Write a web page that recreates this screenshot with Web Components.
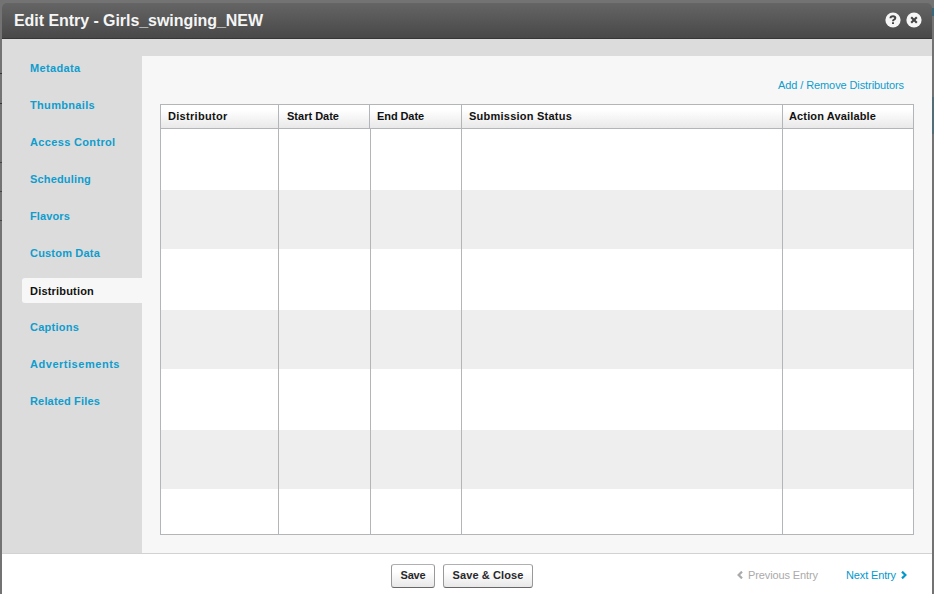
<!DOCTYPE html>
<html lang="en"><head><meta charset="utf-8"><title>Edit Entry</title>
<style>
html,body{margin:0;height:594px;overflow:hidden}
body{font:11px/14px "Liberation Sans",Arial,sans-serif;background:#737373}
</style></head><body>
<entry-dialog></entry-dialog>
<script>
const define=(name,html,init)=>customElements.define(name,class extends HTMLElement{
  connectedCallback(){
    if(this.shadowRoot)return;
    const t=document.createElement('template');t.innerHTML=html;
    this.attachShadow({mode:'open'}).append(t.content.cloneNode(true));
    if(init)init.call(this,this.shadowRoot);
  }
});
// A label whose tracking is adjusted so that its text takes w pixels.
define('fit-label',`<style>:host{display:inline-block;white-space:nowrap}span{display:inline-block}</style><span><slot></slot></span>`,function(r){
  const s=r.querySelector('span'),w=+this.getAttribute('w');
  this.style.width=w+'px';
  s.style.letterSpacing=(w-s.getBoundingClientRect().width)/this.textContent.length+'px';
});
define('title-bar',`<style>
:host{box-sizing:border-box;display:flex;align-items:center;height:36px;padding:1px 10px 0 12px;border-radius:5px 5px 0 0;border-bottom:1px solid #393535;background:linear-gradient(#646564,#474847);color:#f5f5f5;font:bold 16px/20px "Liberation Sans",Arial,sans-serif}
.icons{margin:0 0 2px auto;display:flex;gap:5px}svg{display:block}
</style><slot></slot><div class="icons">
<svg width="16" height="16" viewBox="0 0 16 16"><circle cx="8" cy="8" r="7.6" fill="#f6f6f6"/><path d="M5.6 6.2V5.2Q5.8 4.2 8 4.2T10.3 5.9Q10.3 7 9 7.6Q8 8 8 9.3M8 10.3V12" fill="none" stroke="#444" stroke-width="2"/></svg>
<svg width="16" height="16" viewBox="0 0 16 16"><circle cx="8" cy="8" r="7.6" fill="#f6f6f6"/><path d="M5.2 5.2l5.6 5.6M10.8 5.2l-5.6 5.6" stroke="#444" stroke-width="2.1"/></svg></div>`);
define('nav-item',`<style>
:host{box-sizing:border-box;display:flex;align-items:center;height:25px;margin:0 0 12px 20px;padding:0 0 2px 8px;border-radius:3px 0 0 3px;color:#0e9dce;font-weight:bold}
:host([active]){background:#f7f7f7;color:#111;padding:1px 0 0 8px}
</style><slot></slot>`);
define('distributor-table',`<style>
:host{box-sizing:border-box;display:flex;flex-direction:column;width:754px;height:431px;border:1px solid #b3b6b9;overflow:hidden;background:#fff}
.g{display:grid}
.head{height:23px;flex:none;grid-template-columns:118px 91px 92px 321px 1fr;border-bottom:1px solid #b3b6b9;background:linear-gradient(#fff 20%,#e9e9e9);font-weight:bold;color:#111}
.body{flex:1;grid-template-columns:118px 92px 91px 321px 1fr;background:repeating-linear-gradient(transparent 0 61px,#eee 61px 120px)}
.g>div{box-sizing:border-box;border-right:1px solid #b3b6b9}.g>div:last-child{border:0}
.head>div{padding:4px 0 0 7px}.head>div:nth-child(2){padding-left:8px}.head>div:last-child{padding-left:6px}
</style><div class="g head"><div><fit-label w="59.5">Distributor</fit-label></div><div><fit-label w="52">Start Date</fit-label></div><div><fit-label w="47">End Date</fit-label></div><div><fit-label w="103">Submission Status</fit-label></div><div><fit-label w="87">Action Available</fit-label></div></div>
<div class="g body"><div></div><div></div><div></div><div></div><div></div></div>`);
define('push-button',`<style>
:host{box-sizing:border-box;display:flex;justify-content:center;height:24px;padding:3px 0 0;border:1px solid #999;border-top-color:#b0b0b0;border-bottom-color:#666;border-radius:3px;background:linear-gradient(#fff 30%,#e8e8e8);color:#292929;font-weight:bold}
</style><slot></slot>`);
define('pager-link',`<style>:host{display:flex;align-items:center;gap:5px;color:#0099cd}:host([disabled]){color:#aaa}svg{display:block}:host([disabled]) svg{order:-1;transform:scaleX(-1)}</style>
<slot></slot><svg width="6" height="8" viewBox="0 0 6 8"><path d="M1 .6L4.4 4L1 7.4" fill="none" stroke="currentColor" stroke-width="2.2"/></svg>`);
define('entry-dialog',`<style>
:host{box-sizing:border-box;display:flex;flex-direction:column;height:594px;padding:3px 2px 0;background:linear-gradient(#37342f,#37342f) 0 73px/2px 1px no-repeat,linear-gradient(#37342f,#37342f) 0 103px/2px 1px no-repeat,linear-gradient(#444,#444) 0 162px/2px 1px no-repeat,linear-gradient(#444,#444) 0 191px/2px 1px no-repeat,linear-gradient(#444,#444) 0 220px/2px 1px no-repeat,linear-gradient(#38677b,#38677b) 100% 8px/2px 8px no-repeat,linear-gradient(#536d78,#536d78) 100% 97px/2px 37px no-repeat,#737373}
.main{height:514px;display:flex;background:#dcdcdc}
nav{width:140px;padding-top:17px;flex:none}
section{box-sizing:border-box;flex:1;margin-top:17px;padding:22px 18px 0;background:#f7f7f7;display:flex;flex-direction:column}
.link{color:#0e9dce;align-self:flex-end;margin:0 10px 12px 0;height:14px}
footer{flex:1;border-top:1px solid #d0d3d4;background:#fff;display:flex;align-items:flex-start;padding:10px 25px 0 389px}
.one{width:44px;margin-right:8px}.two{width:90px}
.prev{margin:4px 28px 0 auto}.next{margin-top:4px}
</style><title-bar><fit-label w="249">Edit Entry - Girls_swinging_NEW</fit-label></title-bar>
<div class="main"><nav>
<nav-item><fit-label w="50.5">Metadata</fit-label></nav-item>
<nav-item><fit-label w="65">Thumbnails</fit-label></nav-item>
<nav-item><fit-label w="85.5">Access Control</fit-label></nav-item>
<nav-item><fit-label w="61">Scheduling</fit-label></nav-item>
<nav-item><fit-label w="40">Flavors</fit-label></nav-item>
<nav-item><fit-label w="70">Custom Data</fit-label></nav-item>
<nav-item active><fit-label w="64">Distribution</fit-label></nav-item>
<nav-item><fit-label w="49">Captions</fit-label></nav-item>
<nav-item><fit-label w="90">Advertisements</fit-label></nav-item>
<nav-item><fit-label w="70">Related Files</fit-label></nav-item>
</nav><section><fit-label class="link" w="126">Add / Remove Distributors</fit-label><distributor-table></distributor-table></section></div>
<footer><push-button class="one"><fit-label w="25">Save</fit-label></push-button><push-button class="two"><fit-label w="71">Save &amp; Close</fit-label></push-button>
<pager-link class="prev" disabled><fit-label w="70">Previous Entry</fit-label></pager-link><pager-link class="next"><fit-label w="50">Next Entry</fit-label></pager-link></footer>`);
</script></body></html>
